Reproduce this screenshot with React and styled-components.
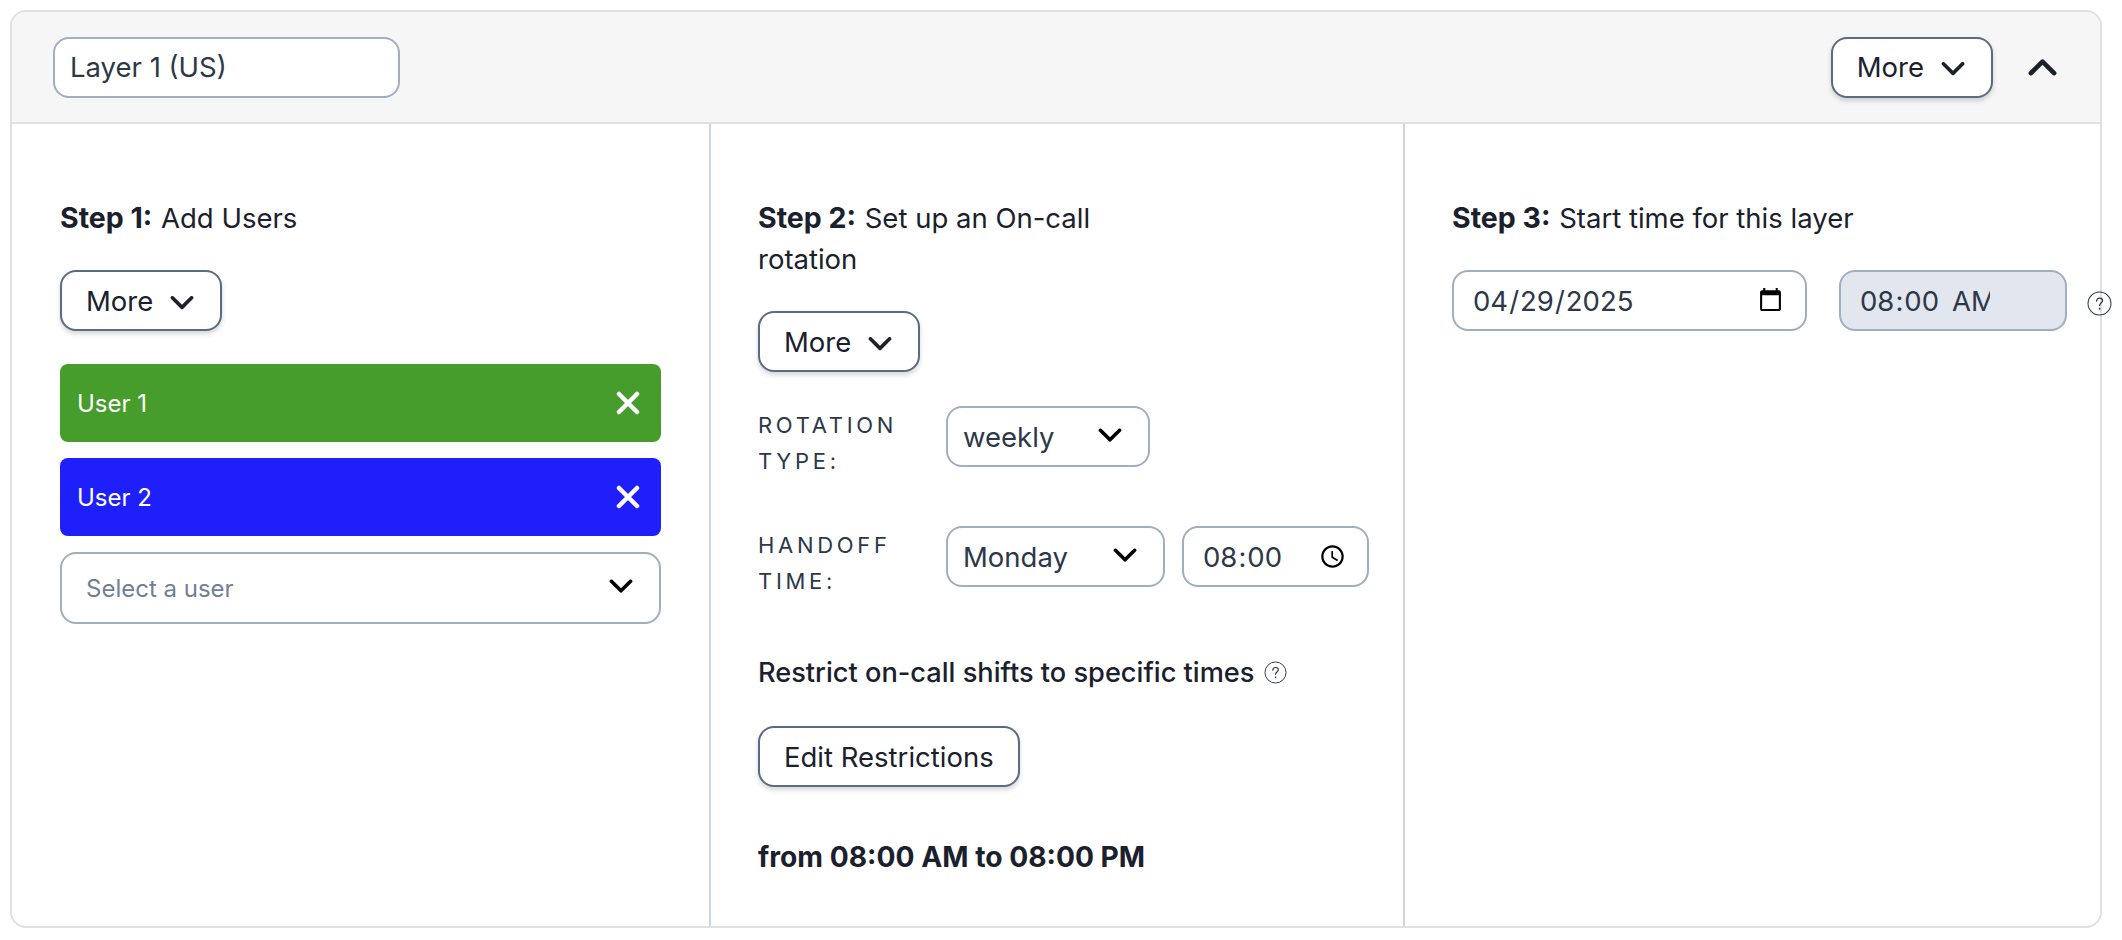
import React from 'react';
import styled, { createGlobalStyle } from 'styled-components';

const GlobalStyle = createGlobalStyle`
	html, body {
		margin: 0;
		padding: 0;
		background: #ffffff;
	}
	body {
		font-family: Inter, "Liberation Sans", sans-serif;
		color: #1a202c;
	}
`;

const Page = styled.div`
	width: 2122px;
	height: 940px;
	box-sizing: border-box;
	padding: 10px 20px 12px 10px;
`;
const Card = styled.div`
	height: 100%;
	box-sizing: border-box;
	border: 2px solid #e0e0e0;
	border-radius: 16px;
	display: flex;
	flex-direction: column;
`;
const Header = styled.div`
	height: 112px;
	box-sizing: border-box;
	flex: none;
	display: flex;
	align-items: center;
	justify-content: space-between;
	padding: 0 43px 0 41px;
	background: #f6f6f6;
	border-bottom: 2px solid #e0e0e0;
	border-radius: 14px 14px 0 0;
`;
const HeaderActions = styled.div`
	display: flex;
	align-items: center;
	gap: 35px;
`;
const NameInput = styled.input`
	width: 347px;
	height: 61px;
	box-sizing: border-box;
	padding: 0 15px;
	border: 2px solid #a0aec0;
	border-radius: 16px;
	background: #fff;
	font: 400 27.5px Inter, sans-serif;
	color: #2d3748;
	outline: none;
`;
const Columns = styled.div`
	flex: 1;
	display: grid;
	grid-template-columns: 697px 694px 1fr;
`;
const Column = styled.div`
	box-sizing: border-box;
	padding: 73px 48px 0 48px;
	border-left: ${p => (p.$first ? 'none' : '2px solid #cbd5e0')};
	padding-left: ${p => (p.$first ? '48px' : '47px')};
	display: flex;
	flex-direction: column;
	align-items: flex-start;
`;
const StepTitle = styled.div`
	font-size: 27.5px;
	line-height: 41px;
	color: #1a202c;
	margin-bottom: 31px;
	b {
		font-size: 28.5px;
		font-weight: 700;
		margin-right: 1px;
	}
`;
const Button = styled.button`
	height: 61px;
	box-sizing: border-box;
	padding: 0 26px 0 24px;
	display: inline-flex;
	align-items: center;
	gap: 17px;
	border: 2px solid #5a6b84;
	border-radius: 16px;
	background: #fff;
	box-shadow: 0 3px 5px rgba(0, 0, 0, 0.16);
	font: 400 27.5px Inter, sans-serif;
	color: #1a202c;
	flex: none;
	svg {
		margin-top: 5px;
	}
`;
const IconButton = styled.button`
	border: none;
	background: none;
	padding: 0;
	display: flex;
	color: #1a202c;
`;
const UserList = styled.div`
	width: 100%;
	margin-top: 33px;
	display: flex;
	flex-direction: column;
	gap: 16px;
`;
const UserRow = styled.div`
	height: 78px;
	box-sizing: border-box;
	padding: 0 21px 0 17px;
	display: flex;
	align-items: center;
	justify-content: space-between;
	background: ${p => p.$color};
	border-radius: 8px;
	color: #fff;
	font-size: 24px;
`;
const SelectWrap = styled.div`
	position: relative;
	width: ${p => p.$width};
	height: ${p => p.$height || '61px'};
	flex: none;
`;
const Select = styled.select`
	appearance: none;
	width: 100%;
	height: 100%;
	box-sizing: border-box;
	padding: 0 ${p => (p.$muted ? '24px' : '15px')};
	border: 2px solid #a0aec0;
	border-radius: 16px;
	background: #fff;
	font: 400 ${p => (p.$muted ? '24px' : '27.5px')} Inter, sans-serif;
	color: ${p => (p.$muted ? '#718096' : '#2d3748')};
	outline: none;
`;
const SelectArrow = styled.span`
	position: absolute;
	right: 28px;
	top: 50%;
	transform: translateY(-60%);
	display: flex;
	color: #000;
	pointer-events: none;
`;
const FieldRow = styled.div`
	display: flex;
	align-items: flex-start;
	gap: 16px;
	margin-top: ${p => p.$top};
`;
const FieldLabel = styled.div`
	width: 172px;
	flex: none;
	font-size: 22px;
	line-height: 36px;
	letter-spacing: 3.7px;
	text-transform: uppercase;
	color: #2d3748;
	padding-top: 1px;
`;
const DateInput = styled.input`
	width: ${p => p.$width};
	height: 61px;
	box-sizing: border-box;
	flex: none;
	margin-left: ${p => p.$left || '0'};
	padding: 0 ${p => p.$padRight || '21px'} 0 18px;
	border: 2px solid #a0aec0;
	border-radius: 16px;
	background: ${p => (p.$disabled ? '#e2e6ee' : '#fff')};
	font: 400 27.5px Inter, sans-serif;
	color: #2d3748;
	opacity: 1;
	outline: none;
	&::-webkit-calendar-picker-indicator {
		display: ${p => (p.$noPicker ? 'none' : 'block')};
		width: 27px;
		height: 27px;
		padding: 0;
		margin: 0;
		opacity: 1;
	}
	&::-webkit-datetime-edit-ampm-field {
		${p => (p.$hideAmpm ? 'display: none;' : 'margin-left: 6px;')}
	}
`;
const RestrictRow = styled.div`
	display: flex;
	align-items: center;
	gap: 10px;
	margin-top: 57px;
	font-size: 27.2px;
	font-weight: 500;
	color: #1a202c;
`;
const Summary = styled.div`
	margin-top: 53px;
	font-size: 28.2px;
	font-weight: 700;
	color: #1a202c;
`;
const EditButton = styled(Button)`
	margin-top: 37px;
	padding: 0 24px;
`;
const StartRow = styled.div`
	display: flex;
	align-items: center;
	gap: 32px;
`;
const HelpWrap = styled.span`
	display: flex;
	margin: 6px 0 0 -12px;
	flex: none;
`;

const Chevron = ({ size = 24, up, width = 3 }) => (
	<svg width={size} height={size * 0.6} viewBox="0 0 20 12" fill="none">
		<path
			d={up ? 'M2 10.5 10 2.5 18 10.5' : 'M2 1.5 10 9.5 18 1.5'}
			stroke="currentColor"
			strokeWidth={width}
			strokeLinecap="round"
			strokeLinejoin="round"
		/>
	</svg>
);

const Cross = () => (
	<svg width="24" height="24" viewBox="0 0 24 24" fill="none">
		<path d="M3 3 21 21M21 3 3 21" stroke="#fff" strokeWidth="4.5" strokeLinecap="round" />
	</svg>
);

const Help = ({ size = 24 }) => (
	<svg width={size} height={size} viewBox="0 0 24 24" fill="none">
		<circle cx="12" cy="12" r="11" stroke="#2d3748" strokeWidth="1" />
		<path
			d="M9.2 9.6c0-1.7 1.2-2.8 2.9-2.8 1.6 0 2.8 1 2.8 2.4 0 2.2-2.8 2.4-2.8 4.7"
			stroke="#2d3748"
			strokeWidth="1.2"
			strokeLinecap="round"
		/>
		<circle cx="12.1" cy="17" r="0.9" fill="#2d3748" />
	</svg>
);

const App = () => {
	return (
		<Page>
			<GlobalStyle />
			<Card>
				<Header>
					<NameInput defaultValue="Layer 1 (US)" />
					<HeaderActions>
						<Button>
							More <Chevron />
						</Button>
						<IconButton>
							<Chevron up size={29} width={3.2} />
						</IconButton>
					</HeaderActions>
				</Header>
				<Columns>
					<Column $first>
						<StepTitle>
							<b>Step 1:</b> Add Users
						</StepTitle>
						<Button>
							More <Chevron />
						</Button>
						<UserList>
							<UserRow $color="#479d2c">
								User 1 <Cross />
							</UserRow>
							<UserRow $color="#1f1ffb">
								User 2 <Cross />
							</UserRow>
							<SelectWrap $width="100%" $height="72px">
								<Select $muted defaultValue="">
									<option value="">Select a user</option>
								</Select>
								<SelectArrow>
									<Chevron />
								</SelectArrow>
							</SelectWrap>
						</UserList>
					</Column>
					<Column>
						<StepTitle>
							<b>Step 2:</b> Set up an On-call
							<br />
							rotation
						</StepTitle>
						<Button>
							More <Chevron />
						</Button>
						<FieldRow $top="34px">
							<FieldLabel>Rotation type:</FieldLabel>
							<SelectWrap $width="204px">
								<Select defaultValue="weekly">
									<option>weekly</option>
								</Select>
								<SelectArrow>
									<Chevron />
								</SelectArrow>
							</SelectWrap>
						</FieldRow>
						<FieldRow $top="47px">
							<FieldLabel>Handoff time:</FieldLabel>
							<SelectWrap $width="219px">
								<Select defaultValue="Monday">
									<option>Monday</option>
								</Select>
								<SelectArrow>
									<Chevron />
								</SelectArrow>
							</SelectWrap>
							<DateInput type="time" $width="187px" $left="1px" $hideAmpm defaultValue="08:00" />
						</FieldRow>
						<RestrictRow>
							Restrict on-call shifts to specific times <Help size={23} />
						</RestrictRow>
						<EditButton>Edit Restrictions</EditButton>
						<Summary>from 08:00 AM to 08:00 PM</Summary>
					</Column>
					<Column>
						<StepTitle>
							<b>Step 3:</b> Start time for this layer
						</StepTitle>
						<StartRow>
							<DateInput type="date" $width="355px" defaultValue="2025-04-29" />
							<DateInput
								type="time"
								$width="228px"
								$disabled
								$noPicker
								$padRight="75px"
								disabled
								defaultValue="08:00"
							/>
							<HelpWrap>
								<Help size={25} />
							</HelpWrap>
						</StartRow>
					</Column>
				</Columns>
			</Card>
		</Page>
	);
};

export default App;
